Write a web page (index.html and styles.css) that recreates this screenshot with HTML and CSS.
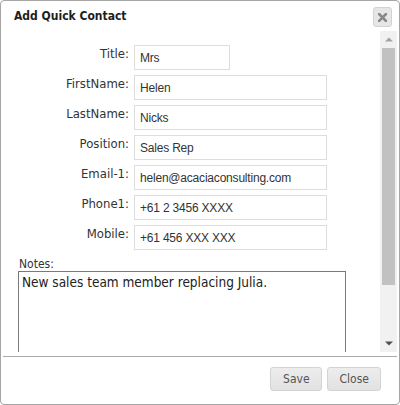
FILE: index.html
```html
<!DOCTYPE html>
<html lang="en">
<head>
	<meta charset="UTF-8">
	<title>Add Quick Contact</title>
	<link rel="stylesheet" href="styles.css">
</head>
<body>
	<div class="dialog">
		<div class="titlebar">
			<span class="title">Add Quick Contact</span>
			<button class="close-btn" title="Close">
				<svg width="9" height="9" viewBox="0 0 9 9"><path d="M1 1L8 8M8 1L1 8" stroke="#888" stroke-width="2.6" stroke-linecap="square"/></svg>
			</button>
		</div>
		<div class="scroll-wrap">
			<div class="content">
				<form class="contact-form">
					<label for="title">Title:</label>
					<input type="text" id="title" class="short" value="Mrs">
					<label for="firstname">FirstName:</label>
					<input type="text" id="firstname" value="Helen">
					<label for="lastname">LastName:</label>
					<input type="text" id="lastname" value="Nicks">
					<label for="position">Position:</label>
					<input type="text" id="position" value="Sales Rep">
					<label for="email">Email-1:</label>
					<input type="text" id="email" value="helen@acaciaconsulting.com">
					<label for="phone">Phone1:</label>
					<input type="text" id="phone" value="+61 2 3456 XXXX">
					<label for="mobile">Mobile:</label>
					<input type="text" id="mobile" value="+61 456 XXX XXX">
				</form>
				<label class="notes-label" for="notes">Notes:</label>
				<textarea id="notes">New sales team member replacing Julia.</textarea>
			</div>
			<div class="scrollbar">
				<div class="sb-arrow">
					<svg width="8" height="5" viewBox="0 0 8 5"><path d="M0 4.5L4 0.5L8 4.5Z" fill="#a3a3a3"/></svg>
				</div>
				<div class="sb-track">
					<div class="sb-thumb"></div>
				</div>
				<div class="sb-arrow">
					<svg width="8" height="5" viewBox="0 0 8 5"><path d="M0 0.5L4 4.5L8 0.5Z" fill="#505050"/></svg>
				</div>
			</div>
		</div>
		<div class="buttonpane">
			<button class="btn">Save</button>
			<button class="btn">Close</button>
		</div>
	</div>
</body>
</html>
```

FILE: styles.css
```css
html, body {
	margin: 0;
	background: #fff;
}
.dialog {
	box-sizing: border-box;
	width: 400px;
	height: 405px;
	padding: 0 2px 2px 2px;
	border: 1px solid #a6a6a6;
	border-radius: 4px;
	display: flex;
	flex-direction: column;
	font-family: "DejaVu Sans Condensed", "DejaVu Sans", sans-serif;
	color: #333;
}
.titlebar {
	height: 30px;
	display: flex;
	align-items: center;
	justify-content: space-between;
	padding: 0 5px 0 11px;
}
.title {
	font-weight: bold;
	font-size: 12px;
	color: #1e1e1e;
}
.close-btn {
	width: 19px;
	height: 20px;
	margin-top: 2px;
	padding: 0;
	display: flex;
	align-items: center;
	justify-content: center;
	background: #e6e6e6;
	border: 1px solid #d3d3d3;
	border-radius: 3px;
}
.scroll-wrap {
	height: 321px;
	display: flex;
}
.content {
	flex: 1;
	overflow: hidden;
	padding: 14px 0 0 15px;
}
.scrollbar {
	width: 17px;
	display: flex;
	flex-direction: column;
	background: #f1f1f1;
}
.sb-arrow {
	height: 17px;
	display: flex;
	align-items: center;
	justify-content: center;
}
.sb-track {
	flex: 1;
}
.sb-thumb {
	height: 237px;
	margin: 0 2px;
	background: #c1c1c1;
}
.contact-form {
	display: grid;
	grid-template-columns: 111px 193px;
	column-gap: 5px;
	row-gap: 5px;
	margin: 0;
}
.contact-form label {
	text-align: right;
	font-size: 13px;
	line-height: 16px;
	padding-top: 1px;
	color: #333;
}
.contact-form input {
	box-sizing: border-box;
	width: 193px;
	height: 25px;
	margin: 0;
	padding: 0 5px;
	border: 1px solid #ddd;
	font-family: "Liberation Sans", Arial, sans-serif;
	font-size: 12px;
	letter-spacing: -0.2px;
	color: #333;
	outline: none;
}
.contact-form input.short {
	width: 96px;
}
.notes-label {
	display: block;
	margin-top: 7px;
	font-size: 12px;
	line-height: 14px;
	padding-left: 1px;
	color: #333;
}
textarea {
	display: block;
	box-sizing: border-box;
	width: 328px;
	height: 130px;
	margin: 0;
	padding: 2px 3px;
	border: 1px solid #7a7a7a;
	font-family: "DejaVu Sans Condensed", "DejaVu Sans", sans-serif;
	font-size: 13.5px;
	color: #222;
	resize: none;
}
.buttonpane {
	margin-top: 4px;
	border-top: 1px solid #aaa;
	padding: 10px 16px 0 0;
	display: flex;
	justify-content: flex-end;
	gap: 5px;
}
.btn {
	height: 24px;
	padding: 0 11px 0 12px;
	background: linear-gradient(#ededed, #e2e2e2);
	border: 1px solid #d3d3d3;
	border-radius: 3px;
	font-family: "DejaVu Sans Condensed", "DejaVu Sans", sans-serif;
	font-size: 12px;
	color: #555;
}
```
